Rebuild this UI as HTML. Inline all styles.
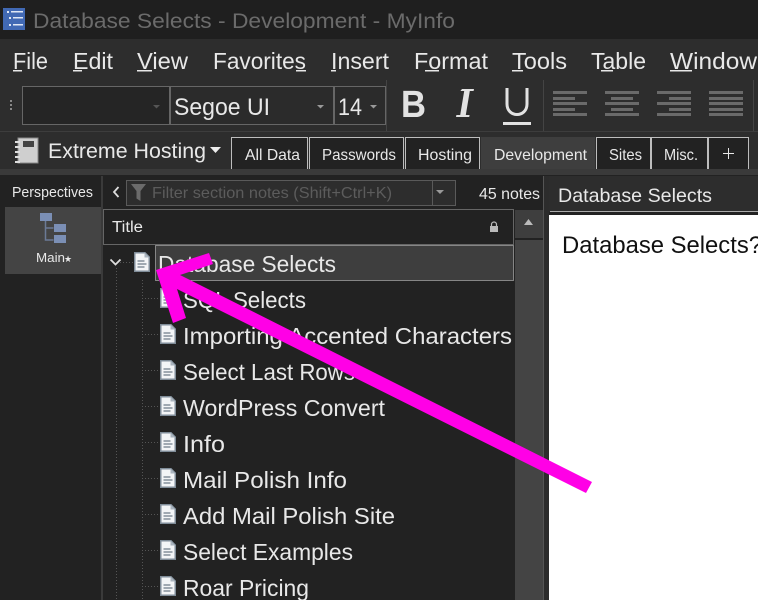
<!DOCTYPE html>
<html><head><meta charset="utf-8"><title>Database Selects - Development - MyInfo</title>
<style>
html,body{margin:0;padding:0;background:#222;overflow:hidden}
svg{display:block}
text{font-family:"Liberation Sans",sans-serif;fill:#e8e8e8}
</style></head><body>
<svg width="758" height="600" viewBox="0 0 758 600" xmlns="http://www.w3.org/2000/svg">
<defs>
<g id="doc">
<path d="M0.750 0.750H11L15.250 5V19.250H0.750Z" fill="#f3f5f7" stroke="#7f8c98" stroke-width="1.500"/>
<path d="M10.500 0.500V5.500H15.500Z" fill="#aab4be"/>
<rect x="3.500" y="8" width="7" height="2" fill="#a0a9b2"/>
<rect x="3.500" y="11" width="9" height="2" fill="#a0a9b2"/>
<rect x="3.500" y="14" width="7" height="2" fill="#a0a9b2"/>
</g>
</defs>
<rect width="758" height="600" fill="#222"/>
<!-- title bar -->
<rect width="758" height="39" fill="#1f1f1f"/>
<rect x="3" y="8" width="22" height="22" fill="#4169b4"/>
<g fill="#dfe7f5"><rect x="7" y="11" width="2" height="2"/><rect x="11" y="11" width="12" height="1.500"/><rect x="9" y="17" width="2" height="2"/><rect x="13" y="17" width="10" height="1.500"/><rect x="9" y="24" width="2" height="2"/><rect x="13" y="24" width="10" height="1.500"/></g>
<text x="33" y="28" font-size="21" textLength="422" lengthAdjust="spacingAndGlyphs" style="fill:#6b6b6b">Database Selects - Development - MyInfo</text>
<!-- menu -->
<rect y="39" width="758" height="136" fill="#2d2d2d"/>
<g font-size="23">
<text x="13" y="69" textLength="35" lengthAdjust="spacingAndGlyphs">File</text>
<text x="73" y="69" textLength="40" lengthAdjust="spacingAndGlyphs">Edit</text>
<text x="137" y="69" textLength="51" lengthAdjust="spacingAndGlyphs">View</text>
<text x="213" y="69" textLength="93" lengthAdjust="spacingAndGlyphs">Favorites</text>
<text x="331" y="69" textLength="58" lengthAdjust="spacingAndGlyphs">Insert</text>
<text x="414" y="69" textLength="74" lengthAdjust="spacingAndGlyphs">Format</text>
<text x="512" y="69" textLength="55" lengthAdjust="spacingAndGlyphs">Tools</text>
<text x="591" y="69" textLength="55" lengthAdjust="spacingAndGlyphs">Table</text>
<text x="670" y="69" textLength="87" lengthAdjust="spacingAndGlyphs">Window</text>
</g>
<g fill="#e8e8e8">
<rect x="13" y="70" width="9" height="1.500"/><rect x="73" y="70" width="9" height="1.500"/><rect x="137" y="70" width="15" height="1.500"/><rect x="296" y="70" width="10" height="1.500"/><rect x="331" y="70" width="5" height="1.500"/><rect x="425" y="70" width="14" height="1.500"/><rect x="512" y="70" width="11" height="1.500"/><rect x="601" y="70" width="12" height="1.500"/><rect x="670" y="70" width="22" height="1.500"/>
</g>
<!-- toolbar -->
<g fill="#888"><rect x="10" y="100" width="2" height="2"/><rect x="10" y="104" width="2" height="2"/><rect x="10" y="108" width="2" height="2"/></g>
<rect x="22.500" y="86.500" width="147" height="38" fill="#252525" stroke="#666"/>
<rect x="170.500" y="86.500" width="163" height="38" fill="#2b2b2b" stroke="#666"/>
<rect x="334.500" y="86.500" width="51" height="38" fill="#2b2b2b" stroke="#666"/>
<path d="M153 105h7l-3.500 3.500z" fill="#555"/><path d="M317 105h7l-3.500 3.500z" fill="#999"/><path d="M370 105h7l-3.500 3.500z" fill="#999"/>
<text x="174" y="115" font-size="24" textLength="96" lengthAdjust="spacingAndGlyphs">Segoe UI</text>
<text x="338" y="115" font-size="24" textLength="24" lengthAdjust="spacingAndGlyphs">14</text>
<rect x="386" y="80" width="1" height="51" fill="#444"/><rect x="543" y="80" width="1" height="51" fill="#444"/><rect x="753" y="80" width="1" height="51" fill="#444"/>
<rect y="131" width="758" height="1" fill="#3d3d3d"/>
<text x="401" y="117" font-size="38" font-weight="700" textLength="25" lengthAdjust="spacingAndGlyphs" style="fill:#e2e2e2">B</text>
<path d="M462 89h12l-.4 2h-3.800l-4 24h3.800l-.4 2H456l.4-2h3.800l4-24h-3.800z" fill="#e2e2e2"/>
<path d="M507 88v16c0 14 20 14 20 0V88" fill="none" stroke="#e2e2e2" stroke-width="3"/>
<rect x="503" y="122" width="28" height="3" fill="#e2e2e2"/>
<g fill="#6a6a6a">
<rect x="553" y="91" width="34" height="3"/><rect x="553" y="97" width="22" height="3"/><rect x="553" y="102" width="34" height="3"/><rect x="553" y="108" width="22" height="3"/><rect x="553" y="113" width="34" height="3"/>
<rect x="605" y="91" width="34" height="3"/><rect x="611" y="97" width="22" height="3"/><rect x="605" y="102" width="34" height="3"/><rect x="611" y="108" width="22" height="3"/><rect x="605" y="113" width="34" height="3"/>
<rect x="657" y="91" width="34" height="3"/><rect x="669" y="97" width="22" height="3"/><rect x="657" y="102" width="34" height="3"/><rect x="669" y="108" width="22" height="3"/><rect x="657" y="113" width="34" height="3"/>
<rect x="709" y="91" width="34" height="3"/><rect x="709" y="97" width="34" height="3"/><rect x="709" y="102" width="34" height="3"/><rect x="709" y="108" width="34" height="3"/><rect x="709" y="113" width="34" height="3"/>
</g>
<!-- notebook -->
<rect x="18" y="138" width="20" height="25" fill="#cfcfcf" stroke="#888"/>
<rect x="23" y="141" width="11" height="6" fill="#444"/>
<g fill="#ddd"><rect x="15" y="141" width="5" height="2"/><rect x="15" y="146" width="5" height="2"/><rect x="15" y="151" width="5" height="2"/><rect x="15" y="156" width="5" height="2"/><rect x="15" y="161" width="5" height="2"/></g>
<text x="48" y="158" font-size="21" textLength="158" lengthAdjust="spacingAndGlyphs">Extreme Hosting</text>
<path d="M210 147h11l-5.500 6z" fill="#eee"/>
<!-- tabs -->
<rect y="169" width="758" height="6" fill="#3a3a3a"/>
<g fill="#222" stroke="#bdbdbd">
<path d="M231.500 169V137.500H307.500V169"/>
<path d="M309.500 169V137.500H403.500V169"/>
<path d="M405.500 169V137.500H479.500V169"/>
<path d="M596.500 169V137.500H650.500V169"/>
<path d="M651.500 169V137.500H707.500V169"/>
<path d="M708.500 169V137.500H748.500V169"/>
</g>
<rect x="481" y="137" width="114" height="32" fill="#3e3e3e"/>
<g font-size="16">
<text x="245" y="160" textLength="55" lengthAdjust="spacingAndGlyphs">All Data</text>
<text x="322" y="160" textLength="74" lengthAdjust="spacingAndGlyphs">Passwords</text>
<text x="418" y="160" textLength="54" lengthAdjust="spacingAndGlyphs">Hosting</text>
<text x="494" y="160" textLength="93" lengthAdjust="spacingAndGlyphs">Development</text>
<text x="609" y="160" textLength="33" lengthAdjust="spacingAndGlyphs">Sites</text>
<text x="664" y="160" textLength="34" lengthAdjust="spacingAndGlyphs">Misc.</text>
</g>
<path d="M728.500 148v11M723 153.500h11" stroke="#e8e8e8" fill="none"/>
<!-- left panel -->
<rect y="176" width="101" height="424" fill="#222"/>
<rect x="101" y="176" width="2" height="424" fill="#3a3a3a"/>
<text x="12" y="197" font-size="14.500" textLength="81" lengthAdjust="spacingAndGlyphs">Perspectives</text>
<rect x="5" y="207" width="96" height="67" fill="#444"/>
<g fill="#7b8fb5"><rect x="40" y="213" width="12" height="8"/><rect x="54" y="224" width="12" height="8"/><rect x="54" y="235" width="12" height="8"/></g>
<path d="M45.500 221v19h8M45.500 228h8" fill="none" stroke="#6b7a96" stroke-width="1.500"/>
<text x="36" y="262" font-size="12.500" textLength="29" lengthAdjust="spacingAndGlyphs">Main</text>
<text x="64" y="262" font-size="9">★</text>
<!-- middle panel -->
<rect x="103" y="176" width="441" height="424" fill="#222"/>
<path d="M118.500 187l-4.500 5 4.500 5" fill="none" stroke="#ddd" stroke-width="1.800"/>
<rect x="126.500" y="180.500" width="329" height="25" fill="#2d2d2d" stroke="#5a5a5a"/>
<rect x="432" y="181" width="1" height="24" fill="#5a5a5a"/>
<path d="M436 190h8l-4 4z" fill="#999"/>
<path d="M131 184h15l-5.500 7v10l-4-2.500v-7.500z" fill="#6b6b6b"/>
<text x="152" y="198" font-size="16" textLength="240" lengthAdjust="spacingAndGlyphs" style="fill:#5c5c5c">Filter section notes (Shift+Ctrl+K)</text>
<text x="479" y="199" font-size="16" textLength="61" lengthAdjust="spacingAndGlyphs">45 notes</text>
<rect x="103.500" y="209.500" width="410" height="35" fill="#222" stroke="#666"/>
<text x="112" y="232" font-size="15.500" textLength="31" lengthAdjust="spacingAndGlyphs">Title</text>
<rect x="490" y="226" width="8" height="6" fill="#bbb"/><path d="M491.500 226v-1.500a2.500 2.500 0 0 1 5 0v1.500" fill="none" stroke="#bbb" stroke-width="1.200"/>
<!-- scrollbar -->
<rect x="515" y="240" width="28" height="360" fill="#444"/>
<rect x="515" y="210" width="28" height="28" fill="#3e3e3e"/>
<path d="M524 225l4.500-6 4.500 6z" fill="#bbb"/>
<rect x="543" y="176" width="1" height="424" fill="#555"/>
<rect x="544" y="176" width="5" height="424" fill="#2c2c2c"/>
<!-- right pane -->
<rect x="549" y="176" width="209" height="36" fill="#2d2d2d"/>
<text x="558" y="202" font-size="19.500" textLength="154" lengthAdjust="spacingAndGlyphs">Database Selects</text>
<rect x="550" y="211" width="208" height="1" fill="#aaa"/>
<rect x="549" y="215" width="209" height="385" fill="#fff"/>
<text x="562" y="253" font-size="24" textLength="200" lengthAdjust="spacingAndGlyphs" style="fill:#111">Database Selects?</text>
<!-- tree guides -->
<g stroke="#555" stroke-dasharray="1 2" fill="none">
<path d="M116.500 268V600M142.500 280V600M120 262.500h13"/>
<path d="M142 298.500h16M142 334.500h16M142 370.500h16M142 406.500h16M142 442.500h16M142 478.500h16M142 514.500h16M142 550.500h16M142 586.500h16"/>
</g>
<path d="M110.500 259.500l5 5 5-5" fill="none" stroke="#ddd" stroke-width="1.800"/>
<rect x="155.500" y="245.500" width="358" height="35" fill="#3e3e3e" stroke="#ddd" stroke-dasharray="1 1"/>
<use href="#doc" x="134" y="252"/>
<use href="#doc" x="160" y="288"/><use href="#doc" x="160" y="324"/><use href="#doc" x="160" y="360"/><use href="#doc" x="160" y="396"/><use href="#doc" x="160" y="432"/><use href="#doc" x="160" y="468"/><use href="#doc" x="160" y="504"/><use href="#doc" x="160" y="540"/><use href="#doc" x="160" y="576"/>
<g font-size="23">
<text x="158" y="272" textLength="178" lengthAdjust="spacingAndGlyphs">Database Selects</text>
<text x="183" y="308" textLength="123" lengthAdjust="spacingAndGlyphs">SQL Selects</text>
<text x="183" y="344" textLength="329" lengthAdjust="spacingAndGlyphs">Importing Accented Characters</text>
<text x="183" y="380" textLength="172" lengthAdjust="spacingAndGlyphs">Select Last Rows</text>
<text x="183" y="416" textLength="202" lengthAdjust="spacingAndGlyphs">WordPress Convert</text>
<text x="183" y="452" textLength="42" lengthAdjust="spacingAndGlyphs">Info</text>
<text x="183" y="488" textLength="164" lengthAdjust="spacingAndGlyphs">Mail Polish Info</text>
<text x="183" y="524" textLength="212" lengthAdjust="spacingAndGlyphs">Add Mail Polish Site</text>
<text x="183" y="560" textLength="170" lengthAdjust="spacingAndGlyphs">Select Examples</text>
<text x="183" y="596" textLength="126" lengthAdjust="spacingAndGlyphs">Roar Pricing</text>
</g>
<!-- arrow -->
<path d="M156 270L209 253L213 264L180 275L592 482L586 493L177 289L186 318L173 323Z" fill="#ff00e6"/>
</svg>
</body></html>
